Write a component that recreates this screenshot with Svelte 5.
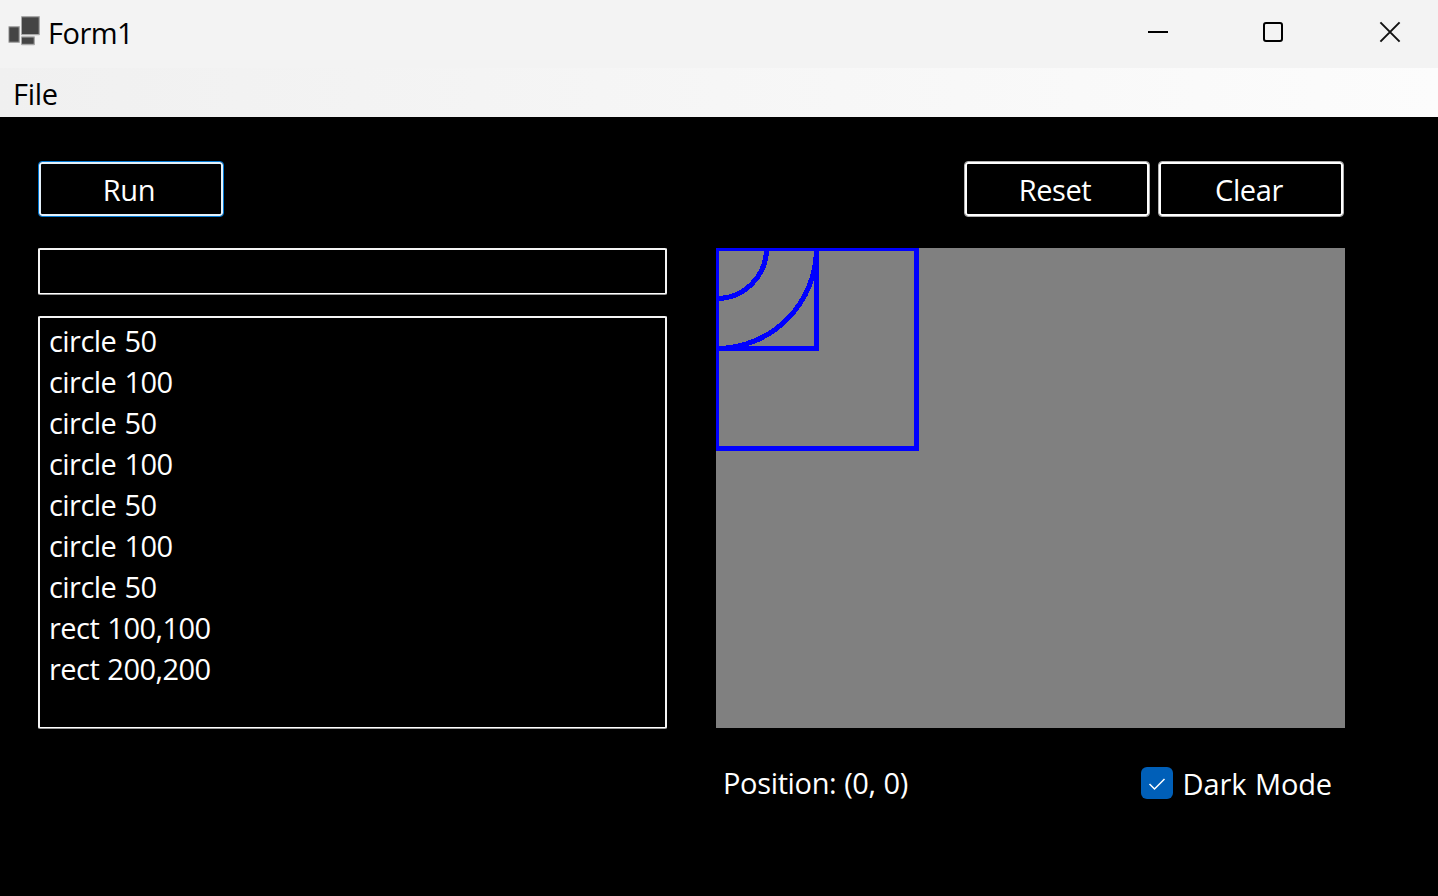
<script>
  const lines = [
    'circle 50', 'circle 100', 'circle 50', 'circle 100', 'circle 50',
    'circle 100', 'circle 50', 'rect 100,100', 'rect 200,200'
  ];
</script>

<div class="window">
  <header class="titlebar">
    <svg class="app-icon" width="40" height="50" viewBox="0 0 40 50">
      <g fill="#a8a8a8">
        <rect x="8.3" y="26" width="11.7" height="17" rx="1" />
        <rect x="21" y="16" width="19" height="19.3" rx="1" />
        <rect x="21" y="36.3" width="14" height="9" rx="1" />
      </g>
      <g fill="#444">
        <rect x="9.3" y="27.3" width="9.4" height="14.4" />
        <rect x="22" y="17.3" width="16.7" height="16.7" />
        <rect x="22" y="37.5" width="11.7" height="6.3" />
      </g>
    </svg>
    <span class="title">Form1</span>
    <svg class="controls" width="290" height="68" viewBox="0 0 290 68" fill="none" stroke="#000" stroke-width="2">
      <path d="M0 32H20" />
      <rect x="116" y="23" width="18" height="18" rx="2" />
      <path d="M232.4 22.4L251.6 41.6M251.6 22.4L232.4 41.6" stroke="#111" stroke-width="2" />
    </svg>
  </header>
  <nav class="menu"><span>File</span></nav>
  <main>
    <div class="buttons">
      <button class="focus"><span class="run">Run</span></button>
      <div class="pair">
        <button><span class="reset">Reset</span></button>
        <button><span class="clear">Clear</span></button>
      </div>
    </div>
    <div class="content">
      <div class="left">
        <div class="box command"></div>
        <div class="box program">
          {#each lines as line}<div class="line">{line}</div>{/each}
        </div>
      </div>
      <div class="right">
        <svg class="canvas" width="629" height="480" viewBox="0 0 629 480" fill="none" stroke="#00f" stroke-width="5" shape-rendering="crispEdges">
          <circle cx="0.5" cy="0.5" r="50" />
          <circle cx="0.5" cy="0.5" r="100" />
          <rect x="0.5" y="0.5" width="100" height="100" />
          <rect x="0.5" y="0.5" width="200" height="200" />
        </svg>
        <div class="status">
          <span class="position">Position: (0, 0)</span>
          <label class="dark">
            <svg width="32" height="32" viewBox="0 0 32 32">
              <rect width="32" height="32" rx="6" fill="#005fb8" />
              <path d="M8.5 17L13.5 22L23.5 12" fill="none" stroke="#fff" stroke-width="1.5" />
            </svg>
            <span>Dark Mode</span>
          </label>
        </div>
      </div>
    </div>
  </main>
</div>

<style>
  :global(body) { margin: 0; background: #000; }
  .window {
    width: 1438px; height: 896px; overflow: hidden; background: #000; color: #fff;
    display: flex; flex-direction: column;
    font: 29px/41px "Open Sans", "Noto Sans", sans-serif;
    white-space: nowrap;
  }
  .titlebar { height: 68px; flex: none; display: flex; align-items: flex-start; background: #f3f3f3; color: #000; }
  .title { margin: 12px 0 0 8px; letter-spacing: -0.5px; }
  .controls { margin-left: auto; }
  .menu { height: 49px; flex: none; box-sizing: border-box; padding: 5px 13px 0; color: #000; letter-spacing: -0.3px; background: linear-gradient(90deg, #f0f0f0, #fcfcfc); }
  main { padding: 44px 93px 0 38px; }
  .buttons { display: flex; justify-content: space-between; padding-right: 1px; }
  .pair { display: flex; gap: 8px; }
  button {
    box-sizing: border-box; width: 186px; height: 56px; padding: 0 4px 0 0; background: #000; color: #fff;
    font: inherit; border: 1px solid #b0b0b0; border-radius: 4px; box-shadow: inset 0 0 0 2px #fff;
    display: flex; justify-content: center; align-items: flex-start;
  }
  button span { margin-top: 7px; letter-spacing: -0.4px; }
  .focus { border-color: #0078d4; box-shadow: inset 0 0 0 2px #e5f1fb; }
  .content { display: flex; justify-content: space-between; margin-top: 31px; }
  .left { width: 629px; display: flex; flex-direction: column; gap: 21px; }
  .box { box-sizing: border-box; border: 2px solid #f4f4f4; border-bottom: 1px solid #999; box-shadow: inset 0 -1px #fff; border-radius: 2px; }
  .command { height: 47px; }
  .program { height: 413px; padding: 2px 9px; }
  .line { height: 41px; letter-spacing: -0.55px; word-spacing: 1.2px; }
  .right { width: 629px; }
  .canvas { display: block; background: #808080; }
  .status { display: flex; justify-content: space-between; align-items: flex-start; padding: 34px 13px 0 7px; }
  .position { letter-spacing: -0.35px; word-spacing: 0.6px; }
  .dark { display: flex; gap: 10px; }
  .dark svg { margin-top: 5px; }
  .dark span { margin-top: 1px; letter-spacing: -0.15px; word-spacing: 1.4px; }
</style>
